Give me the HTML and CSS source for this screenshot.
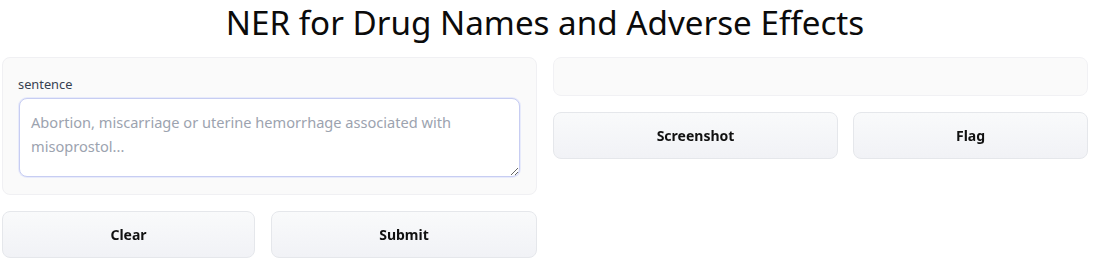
FILE: index.html
```html
<!DOCTYPE html>
<html>
<head>
<meta charset="utf-8">
<link rel="stylesheet" href="styles.css">
</head>
<body>
<div class="app">
  <h1 class="title">NER for Drug Names and Adverse Effects</h1>
  <div class="cols">
    <div class="col">
      <div class="panel">
        <label class="label" for="s">sentence</label>
        <textarea id="s" class="input" autofocus placeholder="Abortion, miscarriage or uterine hemorrhage associated with&#10;misoprostol..."></textarea>
      </div>
      <div class="btnrow left">
        <button class="btn">Clear</button>
        <button class="btn">Submit</button>
      </div>
    </div>
    <div class="col">
      <div class="output"></div>
      <div class="btnrow right">
        <button class="btn">Screenshot</button>
        <button class="btn">Flag</button>
      </div>
    </div>
  </div>
</div>
</body>
</html>
```
FILE: styles.css
```css
html, body {
  margin: 0;
  padding: 0;
  background: #ffffff;
}
body {
  font-family: "Noto Sans", "Open Sans", sans-serif;
  color: #111827;
}
.app {
  padding: 0 16px 0 2px;
}
.title {
  margin: 0;
  height: 57px;
  box-sizing: border-box;
  padding-top: 3px;
  text-align: center;
  font-weight: 400;
  font-size: 33.2px;
  line-height: 40px;
  color: #0b0b0b;
}
.cols {
  display: flex;
  gap: 16px;
}
.col {
  flex: 1;
  display: flex;
  flex-direction: column;
  gap: 16px;
}
.panel {
  background: #fafafa;
  border: 1px solid #f0f0f3;
  border-radius: 8px;
  padding: 18px 16px 17px 15px;
  display: flex;
  flex-direction: column;
  gap: 6px;
}
.label {
  font-size: 12.8px;
  line-height: 16px;
  color: #374151;
}
.input {
  height: 79px;
  box-sizing: border-box;
  margin-left: 1px;
  border: 1px solid #c7cdf2;
  border-radius: 8px;
  background: #ffffff;
  padding: 11px 11px 10px;
  font-family: inherit;
  font-size: 14.6px;
  line-height: 24px;
  color: #111827;
  outline: none;
  resize: vertical;
  box-shadow: 0 0 0 1px #e8ebfb;
}
.input::placeholder {
  color: #9ca3af;
}
.output {
  height: 39px;
  box-sizing: border-box;
  background: #fafafa;
  border: 1px solid #f1f1f4;
  border-radius: 8px;
}
.btnrow {
  display: grid;
  gap: 16px;
}
.btnrow.left {
  grid-template-columns: 253fr 266fr;
}
.btnrow.right {
  grid-template-columns: 285fr 235fr;
  gap: 15px;
}
.btn {
  height: 47px;
  border: 1px solid #e5e7eb;
  border-radius: 8px;
  background: linear-gradient(to bottom, #f9fafb, #f1f2f6);
  font-family: inherit;
  font-weight: 700;
  font-size: 14px;
  color: #111111;
  padding: 0;
}
```
